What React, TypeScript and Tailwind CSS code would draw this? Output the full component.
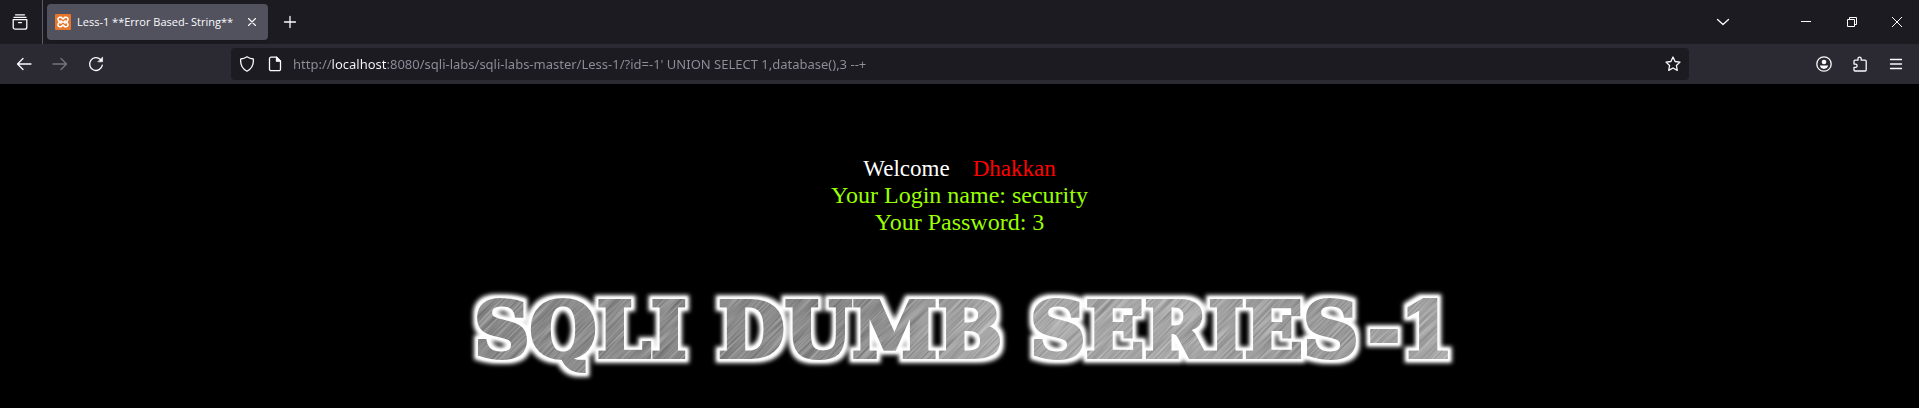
import { useState, type ReactNode } from "react";

function Icon({ children, className = "size-4" }: { children: ReactNode; className?: string }) {
  return (
    <svg
      viewBox="0 0 16 16"
      className={className}
      fill="none"
      stroke="currentColor"
      strokeWidth="1.3"
      strokeLinecap="round"
      strokeLinejoin="round"
      aria-hidden="true"
    >
      {children}
    </svg>
  );
}

function IconButton({ label, className = "w-9", children }: { label: string; className?: string; children: ReactNode }) {
  return (
    <button type="button" aria-label={label} className={`flex h-8 shrink-0 items-center justify-center ${className}`}>
      {children}
    </button>
  );
}

function TabBar() {
  return (
    <div className="flex h-11 items-center bg-[#1c1b22]">
      <div className="flex h-full items-center border-r border-[#5b5b66] pr-1 pl-0.5">
        <IconButton label="Recent browsing">
          <Icon>
            <path d="M3.500 .8h9M2 3.400h12" />
            <path d="M1.200 5.600h13.600v7.600a2 2 0 0 1-2 2H3.200a2 2 0 0 1-2-2zM6.500 8.600h3" />
          </Icon>
        </IconButton>
      </div>
      <div className="ml-1 flex h-9 w-[221px] items-center rounded bg-[#52525e] pl-2 shadow">
        <svg viewBox="0 0 16 16" className="size-4 shrink-0" aria-hidden="true">
          <rect width="16" height="16" rx="1" fill="#e6762b" />
          <path
            d="M4.800 3.300h1.400L8 5l1.800-1.700h1.400a1.900 1.900 0 0 1 1.500 3L11.500 8l1.200 1.700a1.900 1.900 0 0 1-1.500 3H9.800L8 11l-1.800 1.700H4.800a1.900 1.900 0 0 1-1.500-3L4.500 8 3.300 6.300a1.900 1.900 0 0 1 1.500-3zM6 6.200v3.600M10 6.200v3.600M6 8h4"
            fill="none"
            stroke="#fff"
            strokeWidth="1.600"
          />
        </svg>
        <span className="ml-1.5 min-w-0 flex-1 text-[11px] whitespace-nowrap text-[#fbfbfe]">
          Less-1 **Error Based- String**
        </span>
        <IconButton label="Close tab" className="w-8">
          <Icon className="size-3.5">
            <path d="m4 4 8 8M12 4l-8 8" />
          </Icon>
        </IconButton>
      </div>
      <IconButton label="New tab" className="ml-1 w-9">
        <Icon>
          <path d="M8 2.500v11M2.500 8h11" />
        </Icon>
      </IconButton>
      <div className="ml-auto flex">
        <IconButton label="List all tabs" className="mr-10 w-10">
          <Icon>
            <path d="m2.500 5.500 5.500 5 5.500-5" />
          </Icon>
        </IconButton>
        <IconButton label="Minimize" className="w-[46px]">
          <svg viewBox="0 0 10 10" className="size-2.5" aria-hidden="true">
            <path d="M0 4.500h10" stroke="#fff" />
          </svg>
        </IconButton>
        <IconButton label="Restore" className="w-[46px]">
          <svg viewBox="0 0 10 10" className="size-2.5" fill="none" stroke="#fff" aria-hidden="true">
            <path d="M.5 2.500h7v7h-7zM2.500 2.500v-2h7v7h-2" />
          </svg>
        </IconButton>
        <IconButton label="Close window" className="w-11">
          <svg viewBox="0 0 10 10" className="size-2.5" stroke="#fff" aria-hidden="true">
            <path d="m0 0 10 10M10 0 0 10" />
          </svg>
        </IconButton>
      </div>
    </div>
  );
}

function Toolbar() {
  const [url, setUrl] = useState(
    "http://localhost:8080/sqli-labs/sqli-labs-master/Less-1/?id=-1' UNION SELECT 1,database(),3 --+",
  );
  return (
    <div className="flex h-10 items-center bg-[#2b2a33] pr-[5px] pl-1.5">
      <IconButton label="Back">
        <Icon>
          <path d="M15 8H1.500M7 2.500 1.500 8 7 13.500" />
        </Icon>
      </IconButton>
      <IconButton label="Forward" className="w-9 text-[#77767f]">
        <Icon>
          <path d="M1 8h13.500M9 2.500 14.500 8 9 13.500" />
        </Icon>
      </IconButton>
      <IconButton label="Reload">
        <Icon>
          <path d="M14.300 9.200A6.400 6.400 0 1 1 12.500 3.500" />
          <path d="M14.600 1.300v4.500h-4.500z" fill="currentColor" strokeWidth=".6" />
        </Icon>
      </IconButton>
      <form
        className="mx-[117px] flex h-8 min-w-0 flex-1 items-center rounded bg-[#1c1b22]"
        onSubmit={(event) => event.preventDefault()}
      >
        <IconButton label="Tracking protection" className="w-8">
          <Icon>
            <path d="M8 .8c1.800 1.300 4 2 6.300 2.200.5 5-1.200 9.500-6.300 12.200C2.900 12.500 1.200 8 1.700 3 4 2.800 6.200 2.100 8 .8z" />
          </Icon>
        </IconButton>
        <IconButton label="Site information" className="w-6">
          <Icon>
            <path d="M4 1.200h5.500l4 4v8a1.500 1.500 0 0 1-1.500 1.500H4a1.500 1.500 0 0 1-1.500-1.500V2.700A1.500 1.500 0 0 1 4 1.200z" />
            <path d="M9.500 1.200v4h4z" fill="currentColor" />
          </Icon>
        </IconButton>
        <input
          aria-label="Address"
          value={url}
          spellCheck={false}
          onChange={(event) => setUrl(event.target.value)}
          className="ml-1.5 h-8 min-w-0 flex-1 bg-[linear-gradient(90deg,#8f8f9a_39px,#fbfbfe_39px,#fbfbfe_94px,#8f8f9a_94px)] bg-clip-text font-['Noto_Sans',sans-serif] text-[13px] text-transparent caret-white outline-none"
        />
        <IconButton label="Bookmark this page" className="w-8">
          <Icon>
            <path d="m8 1 2.100 4.500 4.900.6-3.600 3.400.9 4.900L8 12l-4.300 2.400.9-4.900L1 6.100l4.900-.6z" />
          </Icon>
        </IconButton>
      </form>
      <IconButton label="Account">
        <Icon>
          <circle cx="8" cy="8" r="7.200" />
          <circle cx="8" cy="6" r="2.300" fill="currentColor" stroke="none" />
          <path d="M3.800 9.600h8.400c-.3 2-2 3.300-4.200 3.300s-3.900-1.300-4.200-3.300z" fill="currentColor" stroke="none" />
        </Icon>
      </IconButton>
      <IconButton label="Extensions">
        <Icon>
          <path d="M2 5.200c0-.7.400-1 1-1h3V2.700a1.600 1.600 0 0 1 3.200 0v1.500h4c.6 0 1 .4 1 1V14c0 .6-.4 1-1 1H3c-.6 0-1-.4-1-1v-2.700h1.500a1.600 1.600 0 0 0 0-3.200H2z" />
        </Icon>
      </IconButton>
      <IconButton label="Menu">
        <Icon>
          <path d="M2.500 3.500h11M2.500 8h11M2.500 12.500h11" />
        </Icon>
      </IconButton>
    </div>
  );
}

function Banner() {
  return (
    <svg viewBox="0 0 1000 100" className="w-[1000px] max-w-full" role="img" aria-label="SQLI DUMB SERIES-1">
      <defs>
        <linearGradient id="steel" x1="0" x2="1" y1="0" y2="0">
          <stop offset="0" stopColor="#888" />
          <stop offset=".4" stopColor="#868686" />
          <stop offset=".52" stopColor="#acacac" />
          <stop offset=".7" stopColor="#aaa" />
          <stop offset=".85" stopColor="#9a9a9a" />
          <stop offset="1" stopColor="#aaa" />
        </linearGradient>
        <filter id="scratch" x="0" y="0" width="1" height="1" colorInterpolationFilters="sRGB">
          <feTurbulence type="fractalNoise" baseFrequency=".02 .6" numOctaves="2" seed="4" />
          <feColorMatrix values="1.500 0 0 0 -.15  1.500 0 0 0 -.15  1.500 0 0 0 -.15  0 0 0 0 .24" />
        </filter>
        <pattern id="brushed" width="1000" height="100" patternUnits="userSpaceOnUse">
          <rect width="1000" height="100" fill="url(#steel)" />
          <g transform="rotate(-45 500 50)">
            <rect x="100" y="-350" width="800" height="800" filter="url(#scratch)" />
          </g>
        </pattern>
        <filter id="glow" x="-20" y="-10" width="1040" height="130" filterUnits="userSpaceOnUse">
          <feMorphology in="SourceAlpha" operator="dilate" radius="4" result="wide" />
          <feGaussianBlur in="wide" stdDeviation="2" result="soft" />
          <feFlood floodColor="#fff" />
          <feComposite in2="soft" operator="in" result="halo" />
          <feMorphology in="SourceAlpha" operator="dilate" radius="2" result="near" />
          <feGaussianBlur in="near" stdDeviation="1" result="nearSoft" />
          <feFlood floodColor="#fff" />
          <feComposite in2="nearSoft" operator="in" result="edge" />
          <feMerge>
            <feMergeNode in="halo" />
            <feMergeNode in="edge" />
            <feMergeNode in="SourceGraphic" />
          </feMerge>
        </filter>
      </defs>
      <text
        y="71"
        fill="url(#brushed)"
        stroke="url(#brushed)"
        strokeWidth="4"
        filter="url(#glow)"
        className="font-['DejaVu_Serif',serif] text-[77px] font-bold"
      >
        <tspan x="14">SQLI</tspan>
        <tspan x="258">DUMB</tspan>
        <tspan x="570">SERIES</tspan>
        <tspan x="908">-</tspan>
        <tspan x="940">1</tspan>
      </text>
    </svg>
  );
}

export default function App() {
  return (
    <div className="min-h-screen bg-black font-['Open_Sans','Noto_Sans',sans-serif] text-[#fbfbfe]">
      <header>
        <TabBar />
        <Toolbar />
      </header>
      <main className="flex flex-col items-center pt-[71px]">
        <div className="text-center font-['Liberation_Serif',serif] text-2xl leading-[27px] text-[#99ff00]">
          <p className="text-[23px] text-white">
            Welcome&nbsp;&nbsp;&nbsp;&nbsp;<span className="text-[#ff0000]">Dhakkan</span>
          </p>
          <p>Your Login name: security</p>
          <p>Your Password: 3</p>
        </div>
        <div className="mt-[50px] flex w-full justify-center">
          <Banner />
        </div>
      </main>
    </div>
  );
}
